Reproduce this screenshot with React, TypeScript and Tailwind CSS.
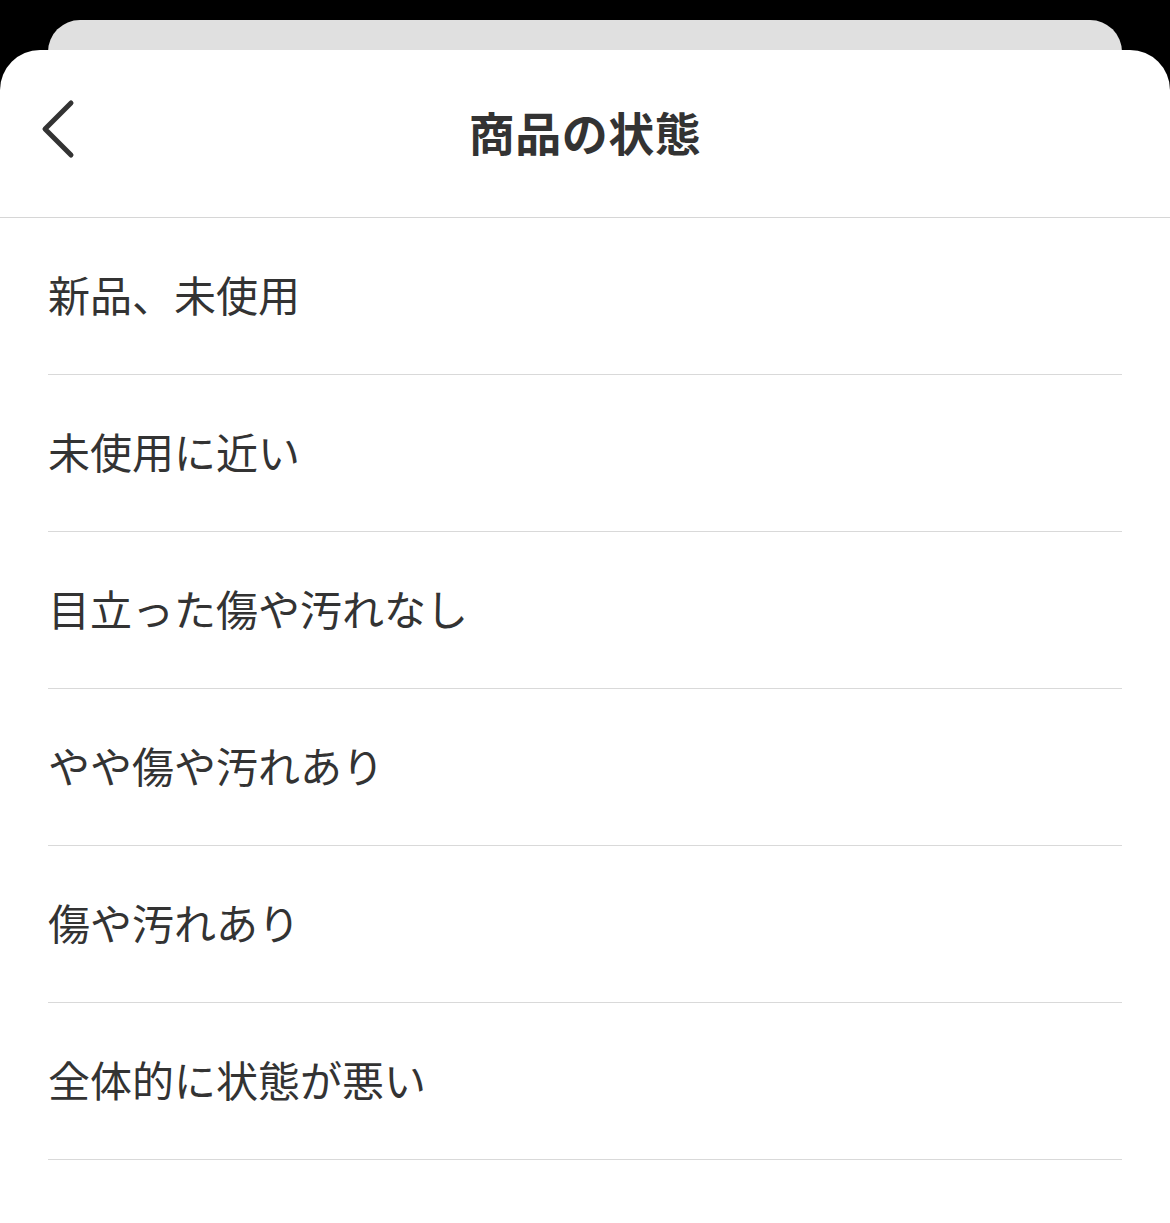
const conditions = [
  '新品、未使用',
  '未使用に近い',
  '目立った傷や汚れなし',
  'やや傷や汚れあり',
  '傷や汚れあり',
  '全体的に状態が悪い',
];

function ChevronLeft() {
  return (
    <svg width="36" height="62" viewBox="0 0 36 62" fill="none" className="text-[#333333]">
      <path d="M31 4 L5 30 L31 56" stroke="currentColor" strokeWidth="5" strokeLinecap="round" strokeLinejoin="round" />
    </svg>
  );
}

export default function App() {
  return (
    <div
      className="min-h-[1223px] w-[1170px] bg-black overflow-hidden"
      style={{ fontFamily: '"Noto Sans CJK JP", "Noto Sans", sans-serif' }}
    >
      <div className="pt-[20px] px-[48px]">
        <div className="h-[40px] rounded-t-[32px] bg-[#e0e0e0]" />
      </div>

      <div className="-mt-[10px] relative min-h-[1173px] rounded-t-[40px] bg-white">
        <header className="relative h-[168px] flex items-center justify-center border-b border-[#d6d6d6]">
          <button className="absolute left-[40px] top-[49px] p-0" aria-label="戻る">
            <ChevronLeft />
          </button>
          <h1 className="text-[46px] font-bold text-[#333333] leading-none tracking-[0.5px] -mt-[6px]">商品の状態</h1>
        </header>

        <ul className="px-[48px]">
          {conditions.map((label) => (
            <li
              key={label}
              className="h-[157px] flex items-center border-b border-[#d9d9d9] text-[42px] text-[#333333] leading-none"
            >
              <span className="-mt-[4px]">{label}</span>
            </li>
          ))}
        </ul>
      </div>
    </div>
  );
}
